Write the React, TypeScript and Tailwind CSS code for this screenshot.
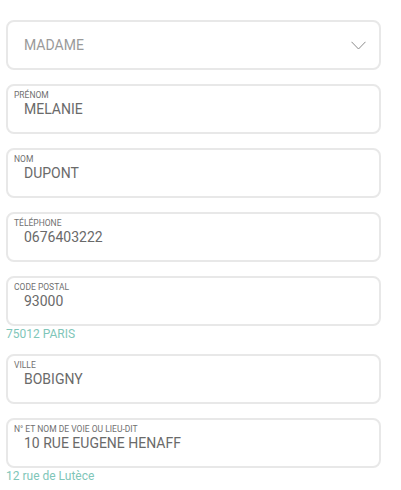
import React from "react";

const font = { fontFamily: "Roboto, 'Liberation Sans', Arial, sans-serif" };

function Field({ label, value, helper }: { label: string; value: string; helper?: string }) {
  return (
    <div className="flex flex-col">
      <div className="h-[50px] border-2 border-[#e8e8e8] rounded-[8px] bg-white pl-[6px] pt-[4px] flex flex-col">
        <div className="text-[8.5px] leading-[10px] text-[#707070] uppercase">{label}</div>
        <div className="text-[14px] leading-[16px] text-[#6a6a6a] pl-[10px] mt-[1px]">{value}</div>
      </div>
      {helper && (
        <div className="text-[12px] leading-[12px] text-[#7fc6b9] mt-[2px]">{helper}</div>
      )}
    </div>
  );
}

export default function App() {
  return (
    <div className="w-[401px] h-[490px] bg-white" style={font}>
      <div className="pt-[20px] pl-[6px] w-[381px] flex flex-col gap-[14px]">
        <div className="h-[50px] border-2 border-[#e8e8e8] rounded-[8px] bg-white flex items-center justify-between pl-[16px] pr-[13px]">
          <span className="text-[14px] leading-[16px] text-[#9a9a9a]">MADAME</span>
          <svg width="15" height="9" viewBox="0 0 15 9" fill="none">
            <path d="M0.5 0.8 L7.5 8 L14.5 0.8" stroke="#8a8a8a" strokeWidth="1" />
          </svg>
        </div>
        <Field label="Prénom" value="MELANIE" />
        <Field label="Nom" value="DUPONT" />
        <Field label="Téléphone" value="0676403222" />
        <Field label="Code postal" value="93000" helper="75012 PARIS" />
        <Field label="Ville" value="BOBIGNY" />
        <Field label="N° et nom de voie ou lieu-dit" value="10 RUE EUGENE HENAFF" helper="12 rue de Lutèce" />
      </div>
    </div>
  );
}
